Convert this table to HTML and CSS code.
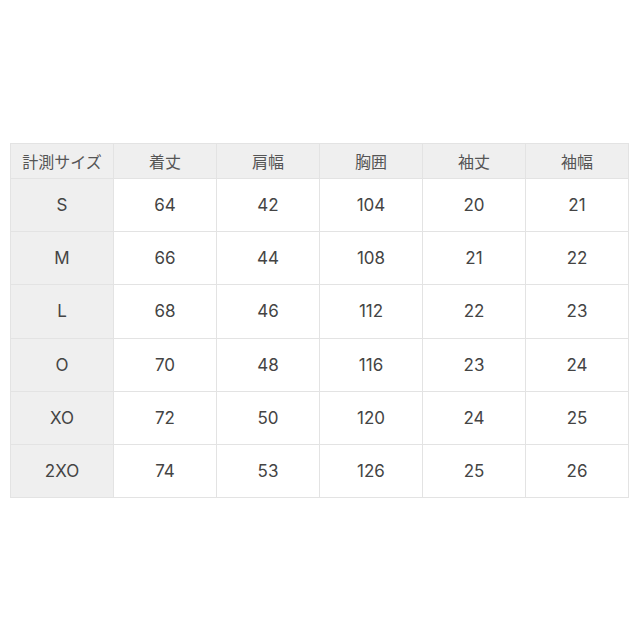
FILE: index.html
```html
<!DOCTYPE html>
<html lang="ja">
<head>
<meta charset="utf-8">
<link rel="stylesheet" href="styles.css">
</head>
<body>
<div class="wrap">
<table class="size">
<thead>
<tr><th>計測サイズ</th><th>着丈</th><th>肩幅</th><th>胸囲</th><th>袖丈</th><th>袖幅</th></tr>
</thead>
<tbody>
<tr><th>S</th><td>64</td><td>42</td><td>104</td><td>20</td><td>21</td></tr>
<tr><th>M</th><td>66</td><td>44</td><td>108</td><td>21</td><td>22</td></tr>
<tr><th>L</th><td>68</td><td>46</td><td>112</td><td>22</td><td>23</td></tr>
<tr><th>O</th><td>70</td><td>48</td><td>116</td><td>23</td><td>24</td></tr>
<tr><th>XO</th><td>72</td><td>50</td><td>120</td><td>24</td><td>25</td></tr>
<tr><th>2XO</th><td>74</td><td>53</td><td>126</td><td>25</td><td>26</td></tr>
</tbody>
</table>
</div>
</body>
</html>
```
FILE: styles.css
```css
html, body {
  margin: 0;
  padding: 0;
  background: #ffffff;
}
.wrap {
  padding: 143px 0 0 10px;
}
.size {
  border-collapse: collapse;
  width: 619px;
  table-layout: fixed;
  font-family: "Inter", "Noto Sans", "Noto Sans CJK JP", sans-serif;
  color: #444444;
}
.size th, .size td {
  border: 1px solid #e3e3e3;
  text-align: center;
  font-weight: 400;
  padding: 0;
}
.size thead th {
  background: #efefef;
  height: 34px;
  font-size: 16px;
  color: #555555;
  font-family: "Noto Sans CJK JP", sans-serif;
}
.size tbody th {
  background: #efefef;
}
.size tbody th, .size tbody td {
  height: 52.2px;
  font-size: 17px;
}
```
